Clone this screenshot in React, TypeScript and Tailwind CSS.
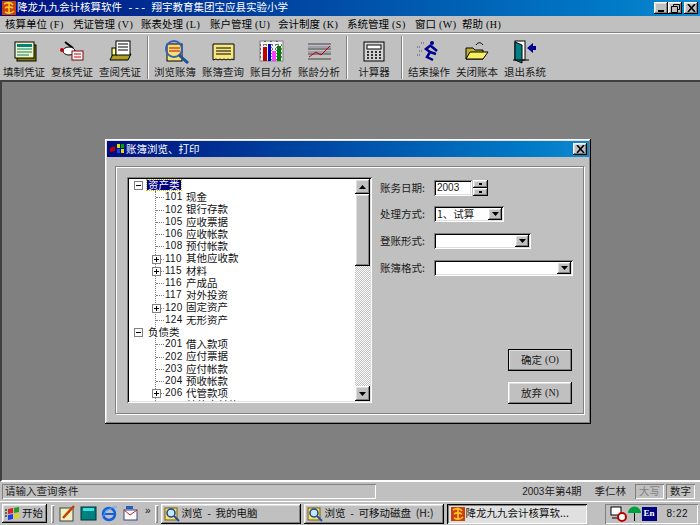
import React from 'react';

const raised = 'shadow-[inset_-1px_-1px_0_#000,inset_1px_1px_0_#fff,inset_-2px_-2px_0_#808080,inset_2px_2px_0_#dfdfdf]';
const sunken = 'shadow-[inset_1px_1px_0_#808080,inset_-1px_-1px_0_#fff,inset_2px_2px_0_#000,inset_-2px_-2px_0_#dfdfdf]';
const thinIn = 'shadow-[inset_1px_1px_0_#808080,inset_-1px_-1px_0_#fff]';

const menus = [
  ['核算单位', '(F)', 'w-[68px]'],
  ['凭证管理', '(V)', 'w-[68px]'],
  ['账表处理', '(L)', 'w-[69px]'],
  ['账户管理', '(U)', 'w-[68px]'],
  ['会计制度', '(K)', 'w-[69px]'],
  ['系统管理', '(S)', 'w-[68px]'],
  ['窗口', '(W)', 'w-[47px]'],
  ['帮助', '(H)', 'w-[47px]'],
];

const Icons: Record<string, React.ReactNode> = {
  fill: (
    <>
      <rect x="6" y="5" width="19" height="16" fill="#808000" stroke="#000" />
      <rect x="4" y="2" width="19" height="16" fill="#f4f4c0" stroke="#000" />
      <rect x="6" y="4" width="15" height="3" fill="#008080" />
      <path d="M6 9h15M6 12h15M6 15h12" stroke="#008080" />
    </>
  ),
  check: (
    <>
      <path d="M6 2l8 6" stroke="#000" strokeWidth="2" />
      <ellipse cx="10" cy="11" rx="6" ry="4" fill="#fff" stroke="#000" />
      <circle cx="3" cy="10" r="2" fill="#c00000" />
      <rect x="13" y="11" width="11" height="9" fill="#fff" stroke="#800000" />
      <path d="M15 14h7M15 17h7" stroke="#c00000" />
    </>
  ),
  view: (
    <>
      <path d="M3 20l3-6h18l-3 6z" fill="#b0a020" stroke="#000" />
      <rect x="5" y="8" width="4" height="7" fill="#ffff80" stroke="#000" />
      <rect x="9" y="1" width="14" height="14" fill="#fff" stroke="#000" />
      <path d="M11 4h10M11 7h10M11 10h10" stroke="#000" />
    </>
  ),
  browse: (
    <>
      <rect x="5" y="4" width="15" height="17" fill="#f4e070" stroke="#000" />
      <path d="M7 8h11M7 11h11" stroke="#c00000" />
      <circle cx="12" cy="9" r="8" fill="none" stroke="#3060c0" strokeWidth="2" />
      <path d="M17 15l9 8" stroke="#2050a0" strokeWidth="3" />
    </>
  ),
  ledger: (
    <>
      <path d="M3 4h21v16l-2-1-2 1-2-1-2 1-2-1-2 1-2-1-2 1-2-1-3 1z" fill="#f8e880" stroke="#000" />
      <path d="M6 8h15M6 11h15M6 14h15" stroke="#000" />
    </>
  ),
  bars: (
    <>
      <rect x="2" y="1" width="23" height="20" fill="#f4f4f4" stroke="#808080" />
      <path d="M2 5h23M2 9h23M2 13h23M2 17h23M7 1v20M13 1v20M19 1v20" stroke="#000" strokeDasharray="1 2" />
      <rect x="5" y="7" width="4" height="14" fill="#c00000" />
      <rect x="10" y="4" width="3" height="17" fill="#0000c0" />
      <rect x="14" y="11" width="4" height="10" fill="#ff40ff" />
      <rect x="19" y="6" width="4" height="15" fill="#008000" />
    </>
  ),
  age: (
    <>
      <path d="M2 4h23M2 9h23M2 14h23M2 19h23" stroke="#404040" />
      <path d="M2 7h23M2 12h23" stroke="#8080a0" />
      <path d="M3 17l7-5 5 3 9-9" fill="none" stroke="#c00000" />
    </>
  ),
  calc: (
    <>
      <rect x="3" y="2" width="20" height="19" fill="#d4d4d4" stroke="#000" />
      <rect x="6" y="5" width="14" height="4" fill="#fff" stroke="#000" />
      <path d="M6 12h2M10 12h2M14 12h2M18 12h2M6 15h2M10 15h2M14 15h2M18 15h2M6 18h2M10 18h2M14 18h2M18 18h2" stroke="#000" strokeWidth="1.5" />
    </>
  ),
  run: (
    <>
      <path d="M1 7h4M3 11h3M5 3h3M1 15h3" stroke="#404080" strokeDasharray="1 1" />
      <circle cx="16" cy="3" r="2" fill="#000090" />
      <path d="M15 5l-5 4 4 3-3 5 6 3M15 6l6 5M14 12l6 2" fill="none" stroke="#000090" strokeWidth="2.5" />
    </>
  ),
  folder: (
    <>
      <path d="M12 5c2-3 5-3 7 0" fill="none" stroke="#000" />
      <path d="M2 19V8h7l2 2h8v9z" fill="#c0b030" stroke="#000" />
      <path d="M2 19l4-7h18l-5 7z" fill="#f8f060" stroke="#000" />
    </>
  ),
  exit: (
    <>
      <rect x="3" y="1" width="10" height="19" fill="#fff" stroke="#000" />
      <path d="M3 2l7 3v18l-7-3z" fill="#008080" stroke="#000" />
      <path d="M1 20h16" stroke="#000" />
      <path d="M15 8l6-5v3h3v4h-3v3z" fill="#000090" />
    </>
  ),
};

const toolGroups = [
  [['填制凭证', 'fill'], ['复核凭证', 'check'], ['查阅凭证', 'view']],
  [['浏览账簿', 'browse'], ['账簿查询', 'ledger'], ['账目分析', 'bars'], ['账龄分析', 'age']],
  [['计算器', 'calc']],
  [['结束操作', 'run'], ['关闭账本', 'folder'], ['退出系统', 'exit']],
];

const tree: [string, string, boolean][] = [
  ['101', '现金', false],
  ['102', '银行存款', false],
  ['105', '应收票据', false],
  ['106', '应收帐款', false],
  ['108', '预付帐款', false],
  ['110', '其他应收款', true],
  ['115', '材料', true],
  ['116', '产成品', false],
  ['117', '对外投资', false],
  ['120', '固定资产', true],
  ['124', '无形资产', false],
];

const tree2: [string, string, boolean][] = [
  ['201', '借入款项', false],
  ['202', '应付票据', false],
  ['203', '应付帐款', false],
  ['204', '预收帐款', false],
  ['206', '代管款项', true],
  ['207', '其他应付款', false],
];

function Box({ plus }: { plus: boolean }) {
  return (
    <span className="w-[9px] h-[9px] border border-[#808080] bg-white flex items-center justify-center relative shrink-0">
      <span className="absolute w-[5px] h-px bg-black" />
      {plus && <span className="absolute w-px h-[5px] bg-black" />}
    </span>
  );
}

function ChildRow({ row }: { row: [string, string, boolean] }) {
  return (
    <div className="h-[12.25px] flex items-center relative">
      <span className="absolute left-[22px] top-[6px] w-[8px] border-t border-dotted border-[#808080]" />
      {row[2] && (
        <span className="absolute left-[18px] top-[2px]">
          <Box plus />
        </span>
      )}
      <span className="ml-[31px] w-[21px] font-['Liberation_Sans',sans-serif] text-[10px] tracking-[0.3px]">{row[0]}</span>
      <span>{row[1]}</span>
    </div>
  );
}

function Arrow({ up = false }: { up?: boolean }) {
  return (
    <svg width="7" height="4" viewBox="0 0 7 4">
      <path d={up ? 'M3.5 0L7 4H0z' : 'M0 0h7L3.5 4z'} fill="#000" />
    </svg>
  );
}

function Select({ width, text }: { width: string; text?: string }) {
  return (
    <div className={`${width} h-[16px] bg-white ${sunken} flex items-center justify-between pl-[3px] pr-[2px]`}>
      <span>{text}</span>
      <span className={`w-[14px] h-[12px] bg-[#c0c0c0] ${raised} flex items-center justify-center`}>
        <Arrow />
      </span>
    </div>
  );
}

function WinBtn({ children, className = '' }: { children: React.ReactNode; className?: string }) {
  return (
    <span className={`w-[14px] h-[12px] bg-[#c0c0c0] ${raised} flex items-center justify-center ${className}`}>
      {children}
    </span>
  );
}

function CloseGlyph() {
  return (
    <svg width="9" height="8" viewBox="0 0 9 8">
      <path d="M1 0l7 8M8 0L1 8" stroke="#000" strokeWidth="1.6" />
    </svg>
  );
}

function Logo({ size }: { size: number }) {
  return (
    <svg width={size} height={size} viewBox="0 0 14 14" className="shrink-0">
      <rect width="14" height="14" fill="#c84010" />
      <path d="M2 3c3-2 7-2 9 1M3 7c3-2 6-1 8 0M3 11c2 1 6 2 9-1M7 2v10" fill="none" stroke="#ffc820" strokeWidth="1.6" />
    </svg>
  );
}

function BrowseIcon() {
  return (
    <svg width="16" height="16" viewBox="0 0 16 16" className="shrink-0">
      <rect x="1" y="2" width="12" height="12" fill="#f0e080" stroke="#806000" />
      <circle cx="7" cy="7" r="4" fill="#c0e8ff" stroke="#204080" strokeWidth="1.5" />
      <path d="M10 10l5 5" stroke="#2050a0" strokeWidth="2" />
    </svg>
  );
}

function TaskButton({ label }: { label: string }) {
  return (
    <div className={`w-[140px] h-[20px] shrink-0 bg-[#c0c0c0] ${raised} flex items-center pl-[3px] gap-[2px] whitespace-pre`}>
      <BrowseIcon />
      <span>{label}</span>
    </div>
  );
}

export default function App() {
  return (
    <div className="w-[700px] h-[525px] bg-[#c0c0c0] overflow-hidden flex flex-col text-[10.5px] leading-none text-black font-['Noto_Sans_CJK_SC','Liberation_Sans',sans-serif]">
      {/* title bar */}
      <div className="h-[16px] shrink-0 bg-gradient-to-r from-[#000a80] to-[#1088d0] flex items-center pl-[2px] pr-[2px] text-white">
        <Logo size={14} />
        <span className="ml-[1px] whitespace-pre flex-1 text-[10.5px]">
          降龙九九会计核算软件 <span className="font-['Liberation_Mono',monospace] mx-[3px]">---</span> 翔宇教育集团宝应县实验小学
        </span>
        <WinBtn>
          <span className="w-[6px] h-[2px] bg-black self-end mb-[2px]" />
        </WinBtn>
        <WinBtn>
          <svg width="9" height="9" viewBox="0 0 9 9">
            <path d="M2.5 2V.5h6v5H7M.5 2.5h6v6h-6z" fill="none" stroke="#000" />
          </svg>
        </WinBtn>
        <WinBtn className="ml-[2px]">
          <CloseGlyph />
        </WinBtn>
      </div>

      {/* menu */}
      <div className="h-[17px] shrink-0 flex items-center pl-[5px] border-b border-[#808080]">
        {menus.map(([name, key, w]) => (
          <span key={name} className={`${w} shrink-0 whitespace-nowrap`}>
            {name}
            <span className="font-['Liberation_Serif',serif] text-[10px] tracking-[0.5px] ml-[3px]">{key}</span>
          </span>
        ))}
      </div>

      {/* toolbar */}
      <div className="h-[47px] shrink-0 flex items-stretch border-t border-white pt-[1px]">
        {toolGroups.map((group, i) => (
          <div key={i} className="flex items-stretch">
            {i > 0 && <div className="w-[2px] my-[1px] ml-[3px] mr-[2px] bg-[#808080] border-r border-white" />}
            {group.map(([label, icon]) => (
              <div key={label} className="w-[48px] flex flex-col items-center pt-[5px] text-[#1a1a1a]">
                <svg width="27" height="24" viewBox="0 0 27 24" className="shrink-0">
                  {Icons[icon]}
                </svg>
                <span className="mt-[3px] whitespace-nowrap">{label}</span>
              </div>
            ))}
          </div>
        ))}
      </div>

      {/* MDI client area */}
      <div className="relative flex-1 min-h-0 bg-[#808080] border-t-2 border-l-2 border-[#404040] border-b-2 border-b-white">
        <div className={`absolute left-[103px] top-[57px] w-[486px] h-[285px] bg-[#c0c0c0] ${raised} p-[2px] flex flex-col`}>
          <div className="h-[16px] shrink-0 bg-gradient-to-r from-[#000a80] to-[#1088d0] text-white flex items-center pl-[3px] pr-[2px]">
            <svg width="15" height="12" viewBox="0 0 15 12" className="shrink-0">
              <path d="M0 5l5-2v5L0 9z" fill="#c00000" />
              <path d="M7 1h3v4H7z" fill="#e0e000" />
              <path d="M11 1h3v4h-3z" fill="#00a000" />
              <path d="M7 6h3v4H7z" fill="#2040e0" />
              <path d="M11 6h3v4h-3z" fill="#e0e000" />
            </svg>
            <span className="ml-px flex-1">账簿浏览、打印</span>
            <WinBtn>
              <CloseGlyph />
            </WinBtn>
          </div>

          <div className="flex-1 min-h-0 pt-[9px] pl-[8px] pr-[5px] pb-[8px] flex">
            <div className="flex-1 min-w-0 border border-[#808080] shadow-[1px_1px_0_#fff,inset_1px_1px_0_#fff] pl-[11px] pt-[10px] pb-[8px] pr-[10px] flex">
              {/* account tree */}
              <div className={`w-[245px] h-[226px] shrink-0 bg-white ${sunken} p-[2px] flex overflow-hidden`}>
                <div className="flex-1 min-w-0 overflow-hidden relative pl-[5px] text-[#111]">
                  <span className="absolute left-[26px] top-[12px] bottom-0 border-l border-dotted border-[#808080]" />
                  <div className="h-[12.25px] flex items-center relative">
                    <Box plus={false} />
                    <span className="ml-[4px] bg-[#000080] text-white px-px outline-1 outline-dotted outline-[#c0c000]">资产类</span>
                  </div>
                  {tree.map((row) => (
                    <ChildRow key={row[0]} row={row} />
                  ))}
                  <div className="h-[12.25px] flex items-center relative">
                    <Box plus={false} />
                    <span className="ml-[5px]">负债类</span>
                  </div>
                  {tree2.map((row) => (
                    <ChildRow key={row[0]} row={row} />
                  ))}
                </div>
                <div className="w-[15px] shrink-0 flex flex-col bg-[repeating-conic-gradient(#c0c0c0_0%_25%,#fff_0%_50%)] bg-[length:2px_2px]">
                  <span className={`h-[15px] shrink-0 bg-[#c0c0c0] ${raised} flex items-center justify-center`}>
                    <Arrow up />
                  </span>
                  <span className={`h-[72px] shrink-0 bg-[#c0c0c0] ${raised}`} />
                  <span className="flex-1" />
                  <span className={`h-[15px] shrink-0 bg-[#c0c0c0] ${raised} flex items-center justify-center`}>
                    <Arrow />
                  </span>
                </div>
              </div>

              {/* form */}
              <div className="flex-1 min-w-0 pl-[8px] pt-[3px] flex flex-col text-[#1a1a1a]">
                <div className="flex items-center h-[16px]">
                  <span className="w-[54px] shrink-0">账务日期:</span>
                  <div className={`w-[38px] h-[16px] bg-white ${sunken} flex items-center pl-[3px] text-[10px] font-['Liberation_Sans',sans-serif]`}>2003</div>
                  <div className="ml-[1px] w-[15px] h-[16px] flex flex-col">
                    <span className={`h-[8px] bg-[#c0c0c0] ${raised} flex items-center justify-center`}>
                      <span className="w-[3px] h-[2px] bg-black" />
                    </span>
                    <span className={`h-[8px] bg-[#c0c0c0] ${raised} flex items-center justify-center`}>
                      <span className="w-[3px] h-[2px] bg-black" />
                    </span>
                  </div>
                </div>
                <div className="flex items-center mt-[10px]">
                  <span className="w-[54px] shrink-0">处理方式:</span>
                  <Select width="w-[70px]" text="1、试算" />
                </div>
                <div className="flex items-center mt-[11px]">
                  <span className="w-[54px] shrink-0">登账形式:</span>
                  <Select width="w-[97px]" />
                </div>
                <div className="flex items-center mt-[11px]">
                  <span className="w-[54px] shrink-0">账簿格式:</span>
                  <Select width="w-[139px]" />
                </div>
                <div className="mt-[73px] ml-[128px] flex flex-col gap-[11px]">
                  <button className={`w-[64px] h-[22px] bg-[#c0c0c0] ${raised} outline outline-black -outline-offset-1 flex items-center justify-center`}>
                    确定
                    <span className="font-['Liberation_Serif',serif] text-[10px] ml-[3px]">(O)</span>
                  </button>
                  <button className={`w-[64px] h-[22px] bg-[#c0c0c0] ${raised} flex items-center justify-center`}>
                    放弃
                    <span className="font-['Liberation_Serif',serif] text-[10px] ml-[3px]">(N)</span>
                  </button>
                </div>
              </div>
            </div>
          </div>
        </div>
      </div>

      {/* status bar */}
      <div className="h-[19px] shrink-0 flex items-center gap-[2px] pl-[2px] pr-[5px] text-[#222]">
        <div className={`w-[374px] h-[15px] ${thinIn} flex items-center pl-[3px]`}>请输入查询条件</div>
        <div className="flex-1 flex items-center justify-end whitespace-pre">
          <span>
            <span className="font-['Liberation_Sans',sans-serif] text-[10px]">2003</span>年第<span className="font-['Liberation_Sans',sans-serif] text-[10px]">4</span>期
          </span>
          <span className="ml-[13px] mr-[9px]">季仁林</span>
          <span className={`w-[29px] h-[15px] ${thinIn} flex items-center justify-center text-[#808080]`}>大写</span>
          <span className={`ml-[2px] w-[29px] h-[15px] ${thinIn} flex items-center justify-center`}>数字</span>
        </div>
      </div>

      {/* taskbar */}
      <div className="h-[24px] shrink-0 border-t border-white flex items-center pl-[2px] pr-[2px] gap-[3px] text-[#111]">
        <div className={`w-[45px] h-[19px] bg-[#c0c0c0] ${raised} flex items-center pl-[3px] shrink-0`}>
          <svg width="16" height="14" viewBox="0 0 16 14" className="shrink-0">
            <path d="M0 3h2M0 6h2M0 9h2" stroke="#000" />
            <path d="M3 2l5-1v5l-5 1z" fill="#e02020" />
            <path d="M9 1l5-1v5l-5 1z" fill="#20a020" />
            <path d="M3 8l5-1v5l-5 1z" fill="#2040e0" />
            <path d="M9 7l5-1v5l-5 1z" fill="#e0d020" />
          </svg>
          <span className="ml-[1px]">开始</span>
        </div>
        <span className="w-[3px] h-[18px] bg-[#c0c0c0] shadow-[inset_1px_1px_0_#fff,inset_-1px_-1px_0_#808080] shrink-0 ml-[1px]" />
        <div className="flex items-center gap-[4px] shrink-0 ml-[2px]">
          <svg width="17" height="17" viewBox="0 0 17 17">
            <rect x="1" y="3" width="13" height="13" fill="#f0f0c0" stroke="#404040" />
            <path d="M4 13L15 1" stroke="#c04000" strokeWidth="2.5" />
          </svg>
          <svg width="17" height="17" viewBox="0 0 17 17">
            <rect x="1" y="2" width="15" height="13" fill="#008080" stroke="#003030" />
            <rect x="3" y="3" width="11" height="3" fill="#40e0e0" />
          </svg>
          <svg width="17" height="17" viewBox="0 0 17 17">
            <circle cx="8" cy="9" r="6" fill="none" stroke="#1060e0" strokeWidth="2.5" />
            <path d="M3 9h11" stroke="#1060e0" strokeWidth="2" />
            <path d="M1 13C4 6 11 1 16 2" fill="none" stroke="#60a0ff" />
          </svg>
          <svg width="17" height="17" viewBox="0 0 17 17">
            <rect x="2" y="5" width="13" height="10" fill="#fff" stroke="#404080" />
            <path d="M2 5l6 5 7-5" fill="none" stroke="#c02020" />
            <path d="M4 1h7v3H4z" fill="#2060c0" />
          </svg>
        </div>
        <span className="font-['Liberation_Sans',sans-serif] text-[10px] ml-[3px] mb-[6px] shrink-0">»</span>
        <span className="w-[3px] h-[18px] bg-[#c0c0c0] shadow-[inset_1px_1px_0_#fff,inset_-1px_-1px_0_#808080] shrink-0 ml-[1px]" />
        <TaskButton label="浏览  -  我的电脑" />
        <TaskButton label="浏览  -  可移动磁盘  (H:)" />
        <div className="w-[140px] h-[20px] shrink-0 bg-[#e0e0e0] shadow-[inset_1px_1px_0_#000,inset_-1px_-1px_0_#fff,inset_2px_2px_0_#808080] flex items-center pl-[4px] gap-[1px] whitespace-pre">
          <Logo size={14} />
          <span>降龙九九会计核算软...</span>
        </div>
        <div className={`flex-1 min-w-0 ml-[15px] h-[20px] ${thinIn} flex items-center pl-[5px]`}>
          <svg width="17" height="16" viewBox="0 0 17 16" className="shrink-0">
            <rect x="1" y="1" width="10" height="8" fill="#fff" stroke="#000" />
            <path d="M2 12h10" stroke="#000" />
            <circle cx="12" cy="11" r="4" fill="#fff" stroke="#c00000" strokeWidth="2" />
          </svg>
          <svg width="15" height="16" viewBox="0 0 15 16" className="shrink-0">
            <path d="M1 7a6 6 0 0 1 13 0z" fill="#00a040" />
            <path d="M7.5 7v8" stroke="#000" />
          </svg>
          <span className="w-[15px] h-[14px] bg-[#000080] text-white text-[9px] flex items-center justify-center font-['Liberation_Serif',serif] font-bold shrink-0">En</span>
          <span className="ml-[10px] font-['Liberation_Sans',sans-serif] text-[10px] tracking-[0.5px]">8:22</span>
        </div>
      </div>
    </div>
  );
}
